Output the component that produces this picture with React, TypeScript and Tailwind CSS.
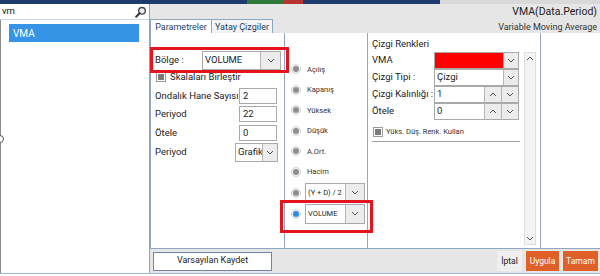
import React from "react"

const font = { fontFamily: 'Roboto, "Liberation Sans", sans-serif' }

function Chevron({ up = false }: { up?: boolean }) {
  return (
    <svg width="8" height="5" viewBox="0 0 8 5" className={up ? "rotate-180" : ""}>
      <path d="M1 1 L4 4 L7 1" fill="none" stroke="#555" strokeWidth="1" />
    </svg>
  )
}

function Select({ value, w, arrow = 19, h = "h-[19px]", small = false }: { value: string; w: string; arrow?: number; h?: string; small?: boolean }) {
  return (
    <div className={`flex ${w} ${h} border border-[#a9a9a9] bg-white`}>
      <div className={`flex flex-1 items-center overflow-hidden whitespace-nowrap pl-[2px] text-[#222] ${small ? "text-[7.5px]" : "text-[9.5px]"}`}>{value}</div>
      <div className="flex shrink-0 items-center justify-center border-l border-[#b5b5b5] bg-[#ececec]" style={{ width: arrow }}>
        <Chevron />
      </div>
    </div>
  )
}

function Input({ value, w = "w-[38px]" }: { value: string; w?: string }) {
  return (
    <div className={`flex h-[16px] ${w} items-center border border-[#a9a9a9] bg-white pl-[3px] text-[9.5px] text-[#222]`}>{value}</div>
  )
}

function Radio({ on = false }: { on?: boolean }) {
  return (
    <div className="flex h-[10px] w-[10px] shrink-0 items-center justify-center rounded-full border border-[#d4d4d4] bg-[#f0f0f0]">
      <div className={`h-[6px] w-[6px] rounded-full ${on ? "bg-[#2c8be2]" : "bg-[#8e8e8e]"}`} />
    </div>
  )
}

function Check() {
  return (
    <div className="flex h-[10px] w-[10px] shrink-0 items-center justify-center border border-[#9a9a9a] bg-white">
      <div className="h-[6px] w-[6px] bg-[#7a7a7a]" />
    </div>
  )
}

function Spin({ value }: { value: string }) {
  return (
    <div className="flex h-[17px] w-[85px] border border-[#a9a9a9] bg-white">
      <div className="flex flex-1 items-center pl-[2px] text-[9.5px] text-[#222]">{value}</div>
      <div className="flex w-[17px] items-center justify-center border-l border-[#b5b5b5] bg-[#ececec]">
        <Chevron up />
      </div>
      <div className="flex w-[17px] items-center justify-center border-l border-[#b5b5b5] bg-[#ececec]">
        <Chevron />
      </div>
    </div>
  )
}

export default function App() {
  const radios = ["Açılış", "Kapanış", "Yüksek", "Düşük", "A.Ort.", "Hacim"]
  return (
    <div className="relative flex h-[276px] w-[600px] flex-col overflow-hidden bg-white" style={font}>
      {/* top strip */}
      <div className="flex h-[4px] shrink-0">
        <div className="w-[247px] bg-[#1d3b6f]" />
        <div className="w-[36px] bg-[#2f7a3a]" />
        <div className="w-[20px] bg-[#b8322f]" />
        <div className="w-[137px] bg-[#1d3b6f]" />
        <div className="flex-1 bg-[#d9d9d9]" />
      </div>

      <div className="flex h-[270px] shrink-0 border-b border-[#9cb8d6]">
        {/* left list */}
        <div className="flex w-[150px] shrink-0 flex-col border-r border-[#8ea6c0]">
          <div className="flex h-[16px] items-center justify-between border-b border-[#c9d8e8] pl-[2px] pr-[2px]">
            <span className="text-[9.5px] text-[#111]">vm</span>
            <svg width="12" height="12" viewBox="0 0 12 12">
              <circle cx="7" cy="4.8" r="3.3" fill="#e8eef5" stroke="#4a4a4a" strokeWidth="1.4" />
              <path d="M4.6 7.2 L1.2 10.8" stroke="#3a3a3a" strokeWidth="2" strokeLinecap="round" />
            </svg>
          </div>
          <div className="flex-1 border-l border-[#8a8a8a] pl-[8px] pt-[4px]">
            <div className="flex h-[18px] w-[130px] items-center bg-[#3594e6] pl-[4px] text-[10px] text-white">VMA</div>
          </div>
        </div>

        {/* right side */}
        <div className="flex flex-1 flex-col bg-[#e6e6e6]">
          {/* header */}
          <div className="flex h-[29px] shrink-0 flex-col">
            <div className="flex h-[15px] items-center justify-end pr-[3px] text-[10.5px] text-[#222]">VMA(Data.Period)</div>
            <div className="flex flex-1 items-end justify-between pr-[3px]">
              <div className="flex h-[17px] items-end">
                <div className="flex h-[17px] w-[62px] items-center justify-center whitespace-nowrap border border-b-0 border-[#8ea6c0] bg-white text-[9px] text-[#1f3f6a]">Parametreler</div>
                <div className="flex h-[17px] w-[61px] items-center justify-center whitespace-nowrap border border-b-0 border-l-0 border-[#8ea6c0] bg-[#f4f4f4] text-[9px] text-[#1f3f6a]">Yatay Çizgiler</div>
              </div>
              <div className="pb-[2px] text-[9px] text-[#333]">Variable Moving Average</div>
            </div>
          </div>

          {/* content */}
          <div className="flex h-[215px] shrink-0 bg-white">
            {/* parameters */}
            <div className="flex w-[135px] shrink-0 flex-col border-l border-r border-[#8ea6c0] pl-[4px] pt-[18px] text-[9.5px] text-[#222]">
              <div className="flex h-[19px] items-center">
                <span className="w-[47px]">Bölge :</span>
                <Select value="VOLUME" w="w-[79px]" arrow={20} />
              </div>
              <div className="mt-[1px] flex h-[12px] items-center gap-[4px] pl-[1px]">
                <Check />
                <span>Skalaları Birleştir</span>
              </div>
              <div className="mt-[5px] flex h-[16px] items-center">
                <span className="w-[84px] whitespace-nowrap">Ondalık Hane Sayısı :</span>
                <Input value="2" />
              </div>
              <div className="mt-[2px] flex h-[16px] items-center">
                <span className="w-[84px]">Periyod</span>
                <Input value="22" />
              </div>
              <div className="mt-[3px] flex h-[16px] items-center">
                <span className="w-[84px]">Ötele</span>
                <Input value="0" />
              </div>
              <div className="mt-[2px] flex h-[19px] items-center">
                <span className="w-[80px]">Periyod</span>
                <Select value="Grafik" w="w-[43px]" arrow={15} />
              </div>
            </div>

            {/* radios */}
            <div className="flex w-[83px] shrink-0 flex-col border-r border-[#8ea6c0] pl-[6px] pt-[26px]">
              {radios.map((r) => (
                <div key={r} className="flex h-[20.5px] items-center gap-[6px]">
                  <Radio />
                  <span className="text-[7.5px] text-[#333]">{r}</span>
                </div>
              ))}
              <div className="flex h-[21px] items-center gap-[4px]">
                <Radio />
                <Select value="(Y + D) / 2" w="w-[60px]" h="h-[20px]" small />
              </div>
              <div className="flex h-[21px] items-center gap-[4px]">
                <Radio on />
                <Select value="VOLUME" w="w-[60px]" h="h-[20px]" small />
              </div>
            </div>

            {/* line colours */}
            <div className="flex w-[173px] shrink-0 border-r border-[#8ea6c0] pl-[4px] pt-[5px] text-[9.5px] text-[#222]">
              <div className="flex w-[148px] flex-col">
                <div className="flex h-[13px] items-center">Çizgi Renkleri</div>
                <div className="mt-[1px] flex h-[17px] items-center">
                  <span className="w-[62px]">VMA</span>
                  <div className="flex h-[17px] w-[85px] border border-[#a9a9a9]">
                    <div className="flex-1 bg-[#ff0000]" />
                    <div className="flex w-[15px] items-center justify-center border-l border-[#b5b5b5] bg-[#ececec]"><Chevron /></div>
                  </div>
                </div>
                <div className="flex h-[17px] items-center">
                  <span className="w-[62px]">Çizgi Tipi :</span>
                  <div className="flex h-[17px] w-[85px] border border-[#a9a9a9] bg-white">
                    <div className="flex flex-1 items-center pl-[2px]">Çizgi</div>
                    <div className="flex w-[15px] items-center justify-center border-l border-[#b5b5b5] bg-[#ececec]"><Chevron /></div>
                  </div>
                </div>
                <div className="flex h-[17px] items-center">
                  <span className="w-[62px] whitespace-nowrap">Çizgi Kalınlığı :</span>
                  <Spin value="1" />
                </div>
                <div className="flex h-[17px] items-center">
                  <span className="w-[62px]">Ötele</span>
                  <Spin value="0" />
                </div>
                <div className="mt-[6px] flex h-[12px] items-center gap-[3px] pl-[1px]">
                  <Check />
                  <span className="text-[7.5px] text-[#333]">Yüks. Düş. Renk. Kullan</span>
                </div>
                <div className="mt-[3px] h-px w-[148px] bg-[#a0a0a0]" />
              </div>
              <div className="ml-[4px] mt-[14px] mb-[3px] flex w-[12px] flex-col justify-between border border-[#dedede] bg-[#f4f4f4]">
                <div className="flex h-[11px] items-center justify-center"><Chevron up /></div>
                <div className="flex h-[11px] items-center justify-center"><Chevron /></div>
              </div>
            </div>
            <div className="flex-1" />
          </div>

          {/* footer */}
          <div className="flex flex-1 items-center justify-between border-t border-[#8ea6c0] pl-[3px] pr-[2px]">
            <div className="flex h-[19px] w-[119px] items-center justify-center border border-[#6f86a3] bg-white text-[9px] text-[#222]">Varsayılan Kaydet</div>
            <div className="flex h-[20px] items-center gap-[4px] text-[8.5px]">
              <div className="flex h-[20px] w-[25px] items-center justify-center bg-[#f0f0f0] text-[#222]">İptal</div>
              <div className="flex h-[20px] w-[33px] items-center justify-center bg-[#e0602a] text-white">Uygula</div>
              <div className="flex h-[20px] w-[35px] items-center justify-center bg-[#e0602a] text-white">Tamam</div>
            </div>
          </div>
        </div>
      </div>

      {/* annotation boxes */}
      <div className="absolute left-[150px] top-[47px] h-[26px] w-[139px] border-[3px] border-[#e3141b]" />
      <div className="absolute left-[280px] top-[200px] h-[33px] w-[93px] border-[3px] border-[#e3141b]" />
      {/* resize handle */}
      <div className="absolute left-[-4px] top-[135px] h-[8px] w-[8px] rounded-full border border-[#555] bg-white" />
    </div>
  )
}
